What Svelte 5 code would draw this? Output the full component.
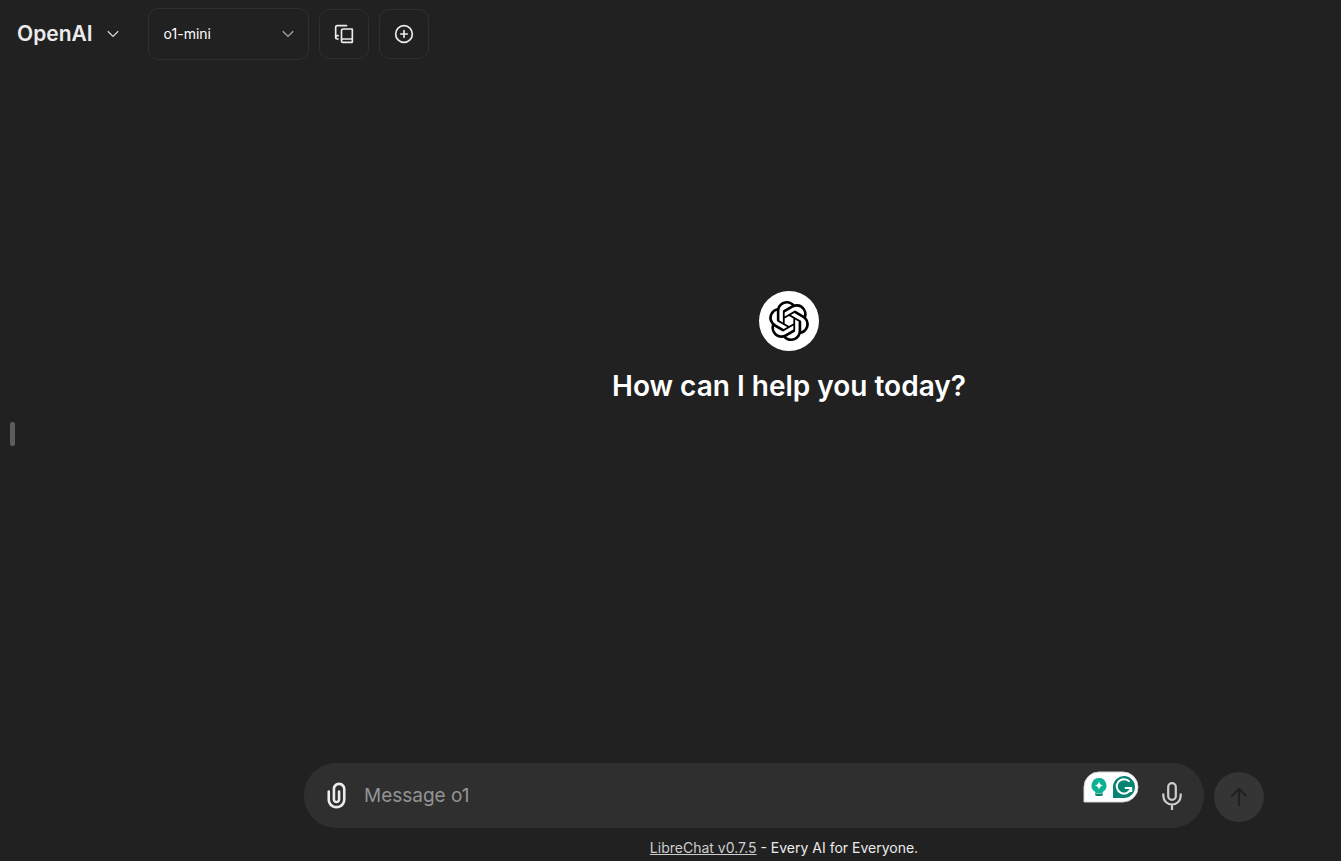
<script>
  let endpoint = $state('OpenAI');
  let model = $state('o1-mini');
  let message = $state('');
</script>

<div class="page">
  <header>
    <button class="endpoint" type="button" aria-haspopup="menu">
      <span>{endpoint}</span>
      <svg class="chevron" viewBox="0 0 12 8" aria-hidden="true"><path d="M.8 1.2 6 6.4l5.2-5.2" /></svg>
    </button>
    <div class="model">
      <select aria-label="Model" bind:value={model}>
        <option value="o1-mini">o1-mini</option>
      </select>
      <svg class="chevron" viewBox="0 0 12 8" aria-hidden="true"><path d="M.8 1.2 6 6.4l5.2-5.2" /></svg>
    </div>
    <button class="tool" type="button" aria-label="Presets">
      <svg viewBox="0 0 24 24" aria-hidden="true">
        <path d="M2 16V4a2 2 0 0 1 2-2h11" />
        <path d="M22 18H11a2 2 0 1 0 0 4h10.5a.5.5 0 0 0 .5-.5v-15a.5.5 0 0 0-.5-.5H11a2 2 0 0 0-2 2v12" />
        <path d="M5 14H4a2 2 0 1 0 0 4h1" />
      </svg>
    </button>
    <button class="tool" type="button" aria-label="Add conversation">
      <svg viewBox="0 0 24 24" aria-hidden="true">
        <circle cx="12" cy="12" r="10" />
        <path d="M8 12h8M12 8v8" />
      </svg>
    </button>
  </header>

  <main>
    <button class="handle" type="button" aria-label="Open sidebar"><span></span></button>
    <section class="landing">
      <div class="logo">
        <svg viewBox="0 0 24 24" aria-hidden="true">
          <path d="M22.2819 9.8211a5.9847 5.9847 0 0 0-.5157-4.9108 6.0462 6.0462 0 0 0-6.5098-2.9A6.0651 6.0651 0 0 0 4.9807 4.1818a5.9847 5.9847 0 0 0-3.9977 2.9 6.0462 6.0462 0 0 0 .7427 7.0966 5.98 5.98 0 0 0 .511 4.9107 6.051 6.051 0 0 0 6.5146 2.9001A5.9847 5.9847 0 0 0 13.2599 24a6.0557 6.0557 0 0 0 5.7718-4.2058 5.9894 5.9894 0 0 0 3.9977-2.9001 6.0557 6.0557 0 0 0-.7475-7.0729zm-9.022 12.6081a4.4755 4.4755 0 0 1-2.8764-1.0408l.1419-.0804 4.7783-2.7582a.7948.7948 0 0 0 .3927-.6813v-6.7369l2.02 1.1686a.071.071 0 0 1 .038.052v5.5826a4.504 4.504 0 0 1-4.4945 4.4944zm-9.6607-4.1254a4.4708 4.4708 0 0 1-.5346-3.0137l.142.0852 4.783 2.7582a.7712.7712 0 0 0 .7806 0l5.8428-3.3685v2.3324a.0804.0804 0 0 1-.0332.0615L9.74 19.9502a4.4992 4.4992 0 0 1-6.1408-1.6464zM2.3408 7.8956a4.485 4.485 0 0 1 2.3655-1.9728V11.6a.7664.7664 0 0 0 .3879.6765l5.8144 3.3543-2.0201 1.1685a.0757.0757 0 0 1-.071 0l-4.8303-2.7865A4.504 4.504 0 0 1 2.3408 7.872zm16.5963 3.8558L13.1038 8.364 15.1192 7.2a.0757.0757 0 0 1 .071 0l4.8303 2.7913a4.4944 4.4944 0 0 1-.6765 8.1042v-5.6772a.79.79 0 0 0-.407-.667zm2.0107-3.0231l-.142-.0852-4.7735-2.7818a.7759.7759 0 0 0-.7854 0L9.409 9.2297V6.8974a.0662.0662 0 0 1 .0284-.0615l4.8303-2.7866a4.4992 4.4992 0 0 1 6.6802 4.66zM8.3065 12.863l-2.02-1.1638a.0804.0804 0 0 1-.038-.0567V6.0742a4.4992 4.4992 0 0 1 7.3757-3.4537l-.142.0805L8.704 5.459a.7948.7948 0 0 0-.3927.6813zm1.0976-2.3654l2.602-1.4998 2.6069 1.4998v2.9994l-2.5974 1.4997-2.6067-1.4997Z" />
        </svg>
      </div>
      <h1>How can I help you today?</h1>
    </section>
  </main>

  <form onsubmit={(event) => event.preventDefault()}>
    <div class="box">
      <button class="attach" type="button" aria-label="Attach files">
        <svg viewBox="0 0 24 24" aria-hidden="true">
          <path d="M9 7C9 4.23858 11.2386 2 14 2C16.7614 2 19 4.23858 19 7V15C19 18.866 15.866 22 12 22C8.13401 22 5 18.866 5 15V9C5 8.44772 5.44772 8 6 8C6.55228 8 7 8.44772 7 9V15C7 17.7614 9.23858 20 12 20C14.7614 20 17 17.7614 17 15V7C17 5.34315 15.6569 4 14 4C12.3431 4 11 5.34315 11 7V15C11 15.5523 11.4477 16 12 16C12.5523 16 13 15.5523 13 15V9C13 8.44772 13.4477 8 14 8C14.5523 8 15 8.44772 15 9V15C15 16.6569 13.6569 18 12 18C10.3431 18 9 16.6569 9 15V7Z" />
        </svg>
      </button>
      <input type="text" placeholder="Message o1" aria-label="Message o1" bind:value={message} />
      <button class="assistant" type="button" aria-label="Writing suggestions">
        <svg viewBox="0 0 56 32" aria-hidden="true">
          <path d="M1 31V16A15 15 0 0 1 16 1h24a15 15 0 0 1 0 30Z" fill="#fff" stroke="#d3d3de" />
          <path d="M16 7a7.5 7.5 0 0 0-4.3 13.6c.5.4.8.9.8 1.4h7c0-.5.3-1 .8-1.4A7.5 7.5 0 0 0 16 7Z" fill="#0bb193" />
          <path d="M16 10.2c.6 2.7 1.5 3.6 4.2 4.3-2.7.7-3.6 1.6-4.2 4.3-.6-2.7-1.5-3.6-4.2-4.3 2.7-.7 3.6-1.6 4.2-4.3Z" fill="#fff" />
          <path d="M12 22.4h8v.7a2 2 0 0 1-2 2h-4a2 2 0 0 1-2-2Z" fill="#07816e" />
          <path d="M30 27V15.5A11 11 0 1 1 41 27Z" fill="#078371" />
          <path d="M46.5 10.7A7.2 7.2 0 1 0 48 17h-6.2M48.2 17v4" fill="none" stroke="#fff" stroke-width="2" />
        </svg>
      </button>
      <button class="mic" type="button" aria-label="Use microphone">
        <svg viewBox="0 0 22 28" aria-hidden="true">
          <rect x="7.2" y="1.2" width="7.6" height="16.6" rx="3.8" />
          <path d="M2.3 11.5v2.3a8.7 8.7 0 0 0 17.4 0v-2.3M11 22.5V28" />
        </svg>
      </button>
    </div>
    <button class="send" type="submit" aria-label="Send message" disabled={!message}>
      <svg viewBox="0 0 18 20" aria-hidden="true"><path d="M9 18.2V2M2 8.8 9 1.8l7 7" /></svg>
    </button>
  </form>

  <footer><a href="https://librechat.ai">LibreChat v0.7.5</a> - Every AI for Everyone.</footer>
</div>

<style>
  :global(body) {
    margin: 0;
    background: #212121;
  }
  .page {
    box-sizing: border-box;
    min-height: 100vh;
    display: flex;
    flex-direction: column;
    color: #ececec;
    font-family: Inter, sans-serif;
  }
  button,
  input,
  select {
    margin: 0;
    padding: 0;
    border: 0;
    background: none;
    color: inherit;
    font: inherit;
  }
  svg {
    display: block;
    fill: none;
    flex: none;
  }
  header {
    display: flex;
    align-items: center;
    gap: 10px;
    padding: 8px 17px;
  }
  .endpoint {
    display: flex;
    align-items: center;
    gap: 14px;
    margin-right: 19px;
    font-size: 21px;
    font-weight: 600;
    line-height: 28px;
  }
  .chevron {
    width: 12px;
    height: 8px;
    stroke: #d5d5d5;
    stroke-width: 1.3;
  }
  .model {
    display: grid;
    align-items: center;
    width: 161px;
  }
  .model > * {
    grid-area: 1 / 1;
  }
  .model .chevron {
    justify-self: end;
    margin-right: 15px;
    stroke: #a8a8a8;
    pointer-events: none;
  }
  select {
    appearance: none;
    box-sizing: border-box;
    width: 100%;
    height: 52px;
    padding: 0 15px 2px;
    border: 1px solid #2f2f2f;
    border-radius: 10px;
    color: #fff;
    font-size: 14px;
  }
  .tool {
    display: grid;
    place-items: center;
    box-sizing: border-box;
    width: 50px;
    height: 50px;
    border: 1px solid #2f2f2f;
    border-radius: 10px;
  }
  .tool svg {
    width: 20px;
    height: 20px;
    stroke: #ececec;
    stroke-width: 2;
    stroke-linecap: round;
    stroke-linejoin: round;
  }
  main {
    flex: 1;
    display: grid;
    grid-template-columns: 237px 1fr;
    align-items: center;
  }
  .handle {
    justify-self: start;
    padding: 36px 10px 0;
  }
  .handle span {
    display: block;
    width: 5px;
    height: 24px;
    border-radius: 2px;
    background: #5c5c5c;
  }
  .landing {
    display: flex;
    flex-direction: column;
    align-items: center;
    gap: 17px;
    padding-bottom: 136px;
  }
  .logo {
    display: grid;
    place-items: center;
    width: 60px;
    height: 60px;
    border-radius: 50%;
    background: #fff;
  }
  .logo svg {
    width: 40px;
    height: 40px;
    fill: #000;
  }
  h1 {
    margin: 0;
    color: #fff;
    font-size: 28px;
    font-weight: 600;
    line-height: 36px;
  }
  form {
    display: flex;
    align-items: flex-end;
    justify-content: center;
    gap: 10px;
    padding-left: 227px;
  }
  .box {
    box-sizing: border-box;
    flex: 0 1 900px;
    display: flex;
    align-items: center;
    height: 65px;
    padding: 0 21px 0 17px;
    border-radius: 32px;
    background: #2f2f2f;
  }
  .attach svg {
    width: 31px;
    height: 31px;
    fill: #ececec;
  }
  input {
    flex: 1;
    min-width: 0;
    height: 40px;
    margin-left: 12px;
    outline: 0;
    font-size: 19px;
  }
  input::placeholder {
    color: #949494;
    opacity: 1;
  }
  .assistant {
    align-self: flex-start;
    margin: 8px 22px 0 0;
  }
  .assistant svg {
    width: 56px;
    height: 32px;
  }
  .mic svg {
    width: 22px;
    height: 28px;
    stroke: #cdcdcd;
    stroke-width: 2.2;
  }
  .send {
    display: grid;
    place-items: center;
    width: 50px;
    height: 50px;
    margin-bottom: 6px;
    border-radius: 50%;
    background: #353535;
  }
  .send svg {
    width: 18px;
    height: 20px;
    stroke: #212121;
    stroke-width: 2.2;
    stroke-linecap: round;
    stroke-linejoin: round;
  }
  footer {
    padding: 10px 0 3px 227px;
    font-size: 14px;
    line-height: 20px;
    text-align: center;
  }
  footer a {
    color: #cdcdcd;
    text-decoration: underline;
  }
</style>
